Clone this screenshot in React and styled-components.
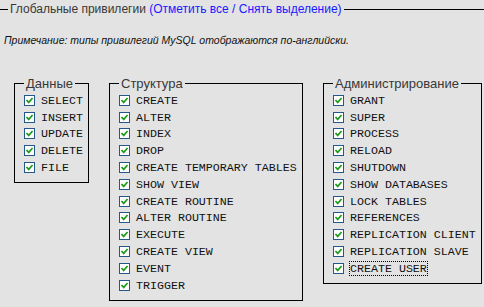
import React from "react";
import styled, { createGlobalStyle } from "styled-components";

const Global = createGlobalStyle`
  html, body { margin: 0; padding: 0; background: #e3e3e3; }
  body { font-family: "Liberation Sans", Arial, sans-serif; }
`;

const Page = styled.div`
  width: 484px;
  height: 307px;
  background: #e3e3e3;
  overflow: hidden;
`;

const Header = styled.div`
  display: flex;
  align-items: center;
  height: 19px;
`;

const Rule = styled.div`
  height: 1px;
  background: #000;
  flex: ${(p) => (p.$grow ? "1 1 auto" : `0 0 ${p.$w}px`)};
`;

const HeaderTitle = styled.div`
  padding: 0 2px;
  font-size: 12px;
  line-height: 15px;
  color: #383838;
  white-space: nowrap;
`;

const LinkGroup = styled.span`
  color: #1a1aff;
`;

const Link = styled.a`
  color: #1a1aff;
  text-decoration: none;
  cursor: pointer;
`;

const Note = styled.p`
  margin: 15px 0 0 4px;
  font-size: 10.5px;
  line-height: 13px;
  font-style: italic;
  color: #111;
`;

const Groups = styled.div`
  display: flex;
  align-items: flex-start;
  gap: 20px;
  margin-top: 29px;
  padding-left: 14px;
`;

const Group = styled.fieldset`
  box-sizing: border-box;
  width: ${(p) => p.$w}px;
  margin: 0;
  padding: 1px 4px 6px 9px;
  border: 1px solid #000;
  min-width: 0;
`;

const Legend = styled.legend`
  padding: 0 2px;
  font-size: 13px;
  line-height: 15px;
  color: #383838;
`;

const Row = styled.label`
  display: flex;
  align-items: center;
  height: 16.8px;
`;

const Box = styled.span`
  box-sizing: border-box;
  flex: 0 0 11px;
  width: 11px;
  height: 11px;
  border: 1px solid #24578a;
  background: #fff;
  display: flex;
  align-items: center;
  justify-content: center;
  margin-right: 6px;
`;

const Text = styled.span`
  font-family: "Liberation Mono", "Courier New", monospace;
  font-size: 11.65px;
  line-height: 13px;
  color: #111;
  white-space: nowrap;
  outline: ${(p) => (p.$focus ? "1px dotted #000" : "none")};
  outline-offset: 0;
`;

const Check = () => (
  <svg width="9" height="9" viewBox="0 0 9 9">
    <path d="M2 4.6 L3.7 6.4 L7 2.6" fill="none" stroke="#1f9a1f" strokeWidth="1.7" strokeLinecap="square" />
  </svg>
);

const groups = [
  { title: "Данные", w: 75, items: ["SELECT", "INSERT", "UPDATE", "DELETE", "FILE"] },
  {
    title: "Структура",
    w: 194,
    items: [
      "CREATE",
      "ALTER",
      "INDEX",
      "DROP",
      "CREATE TEMPORARY TABLES",
      "SHOW VIEW",
      "CREATE ROUTINE",
      "ALTER ROUTINE",
      "EXECUTE",
      "CREATE VIEW",
      "EVENT",
      "TRIGGER",
    ],
  },
  {
    title: "Администрирование",
    w: 159,
    items: [
      "GRANT",
      "SUPER",
      "PROCESS",
      "RELOAD",
      "SHUTDOWN",
      "SHOW DATABASES",
      "LOCK TABLES",
      "REFERENCES",
      "REPLICATION CLIENT",
      "REPLICATION SLAVE",
      "CREATE USER",
    ],
  },
];

export default function App() {
  return (
    <Page>
      <Global />
      <Header>
        <Rule $w={8} />
        <HeaderTitle>
          Глобальные привилегии{" "}
          <LinkGroup>
            (<Link>Отметить все</Link> / <Link>Снять выделение</Link>)
          </LinkGroup>
        </HeaderTitle>
        <Rule $grow />
      </Header>
      <Note>Примечание: типы привилегий MySQL отображаются по-английски.</Note>
      <Groups>
        {groups.map((g) => (
          <Group key={g.title} $w={g.w}>
            <Legend>{g.title}</Legend>
            {g.items.map((it) => (
              <Row key={it}>
                <Box>
                  <Check />
                </Box>
                <Text $focus={it === "CREATE USER"}>{it}</Text>
              </Row>
            ))}
          </Group>
        ))}
      </Groups>
    </Page>
  );
}
